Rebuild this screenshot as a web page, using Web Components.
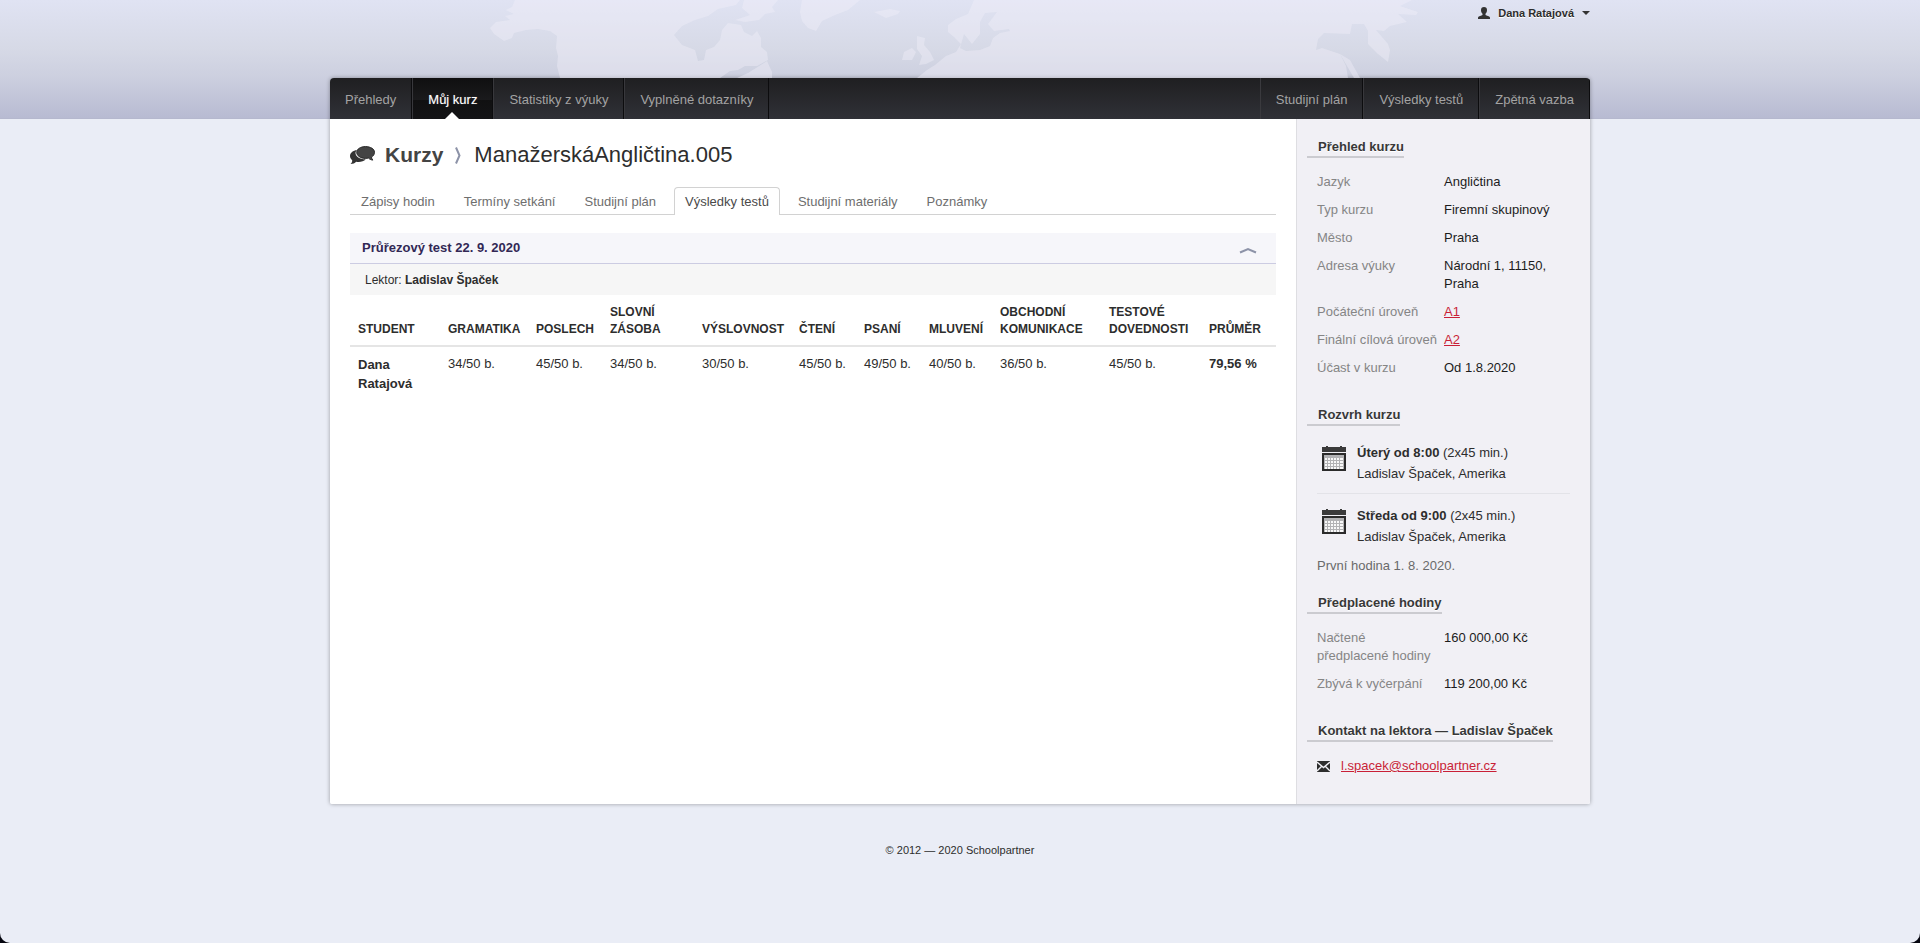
<!DOCTYPE html>
<html lang="cs">
<head>
<meta charset="utf-8">
<meta name="viewport" content="width=device-width, initial-scale=1">
<title>Schoolpartner – Výsledky testů</title>
<style>
html { background: #05060f; }
body { margin: 0; font: 13px/18px "Liberation Sans", Arial, sans-serif; color: #2d2d2d; }
</style>
</head>
<body>
<app-shell>
  <user-menu slot="user">Dana Ratajová</user-menu>
  <nav-bar slot="nav">
    <nav-item>Přehledy</nav-item>
    <nav-item active>Můj kurz</nav-item>
    <nav-item>Statistiky z výuky</nav-item>
    <nav-item>Vyplněné dotazníky</nav-item>
    <nav-item slot="end">Studijní plán</nav-item>
    <nav-item slot="end">Výsledky testů</nav-item>
    <nav-item slot="end">Zpětná vazba</nav-item>
  </nav-bar>
  <course-title section="Kurzy">ManažerskáAngličtina.005</course-title>
  <tab-strip>
    <tab-item>Zápisy hodin</tab-item>
    <tab-item>Termíny setkání</tab-item>
    <tab-item>Studijní plán</tab-item>
    <tab-item active>Výsledky testů</tab-item>
    <tab-item>Studijní materiály</tab-item>
    <tab-item>Poznámky</tab-item>
  </tab-strip>
  <test-panel>
    <span slot="title">Průřezový test 22. 9. 2020</span>
    <span slot="info">Lektor: <b>Ladislav Špaček</b></span>
    <score-table></score-table>
  </test-panel>

  <side-section slot="side" heading="Přehled kurzu">
    <info-row label="Jazyk">Angličtina</info-row>
    <info-row label="Typ kurzu">Firemní skupinový</info-row>
    <info-row label="Město">Praha</info-row>
    <info-row label="Adresa výuky">Národní 1, 11150, Praha</info-row>
    <info-row label="Počáteční úroveň"><red-link>A1</red-link></info-row>
    <info-row label="Finální cílová úroveň"><red-link>A2</red-link></info-row>
    <info-row label="Účast v kurzu">Od 1.8.2020</info-row>
  </side-section>
  <side-section slot="side" heading="Rozvrh kurzu" compact>
    <lesson-slot when="Úterý od 8:00" length="(2x45 min.)">Ladislav Špaček, Amerika</lesson-slot>
    <lesson-slot when="Středa od 9:00" length="(2x45 min.)" last>Ladislav Špaček, Amerika</lesson-slot>
    <side-note>První hodina 1. 8. 2020.</side-note>
  </side-section>
  <side-section slot="side" heading="Předplacené hodiny">
    <info-row label="Načtené předplacené hodiny">160 000,00 Kč</info-row>
    <info-row label="Zbývá k vyčerpání">119 200,00 Kč</info-row>
  </side-section>
  <side-section slot="side" heading="Kontakt na lektora — Ladislav Špaček">
    <mail-contact><red-link>l.spacek@schoolpartner.cz</red-link></mail-contact>
  </side-section>
  <span slot="footer">© 2012 — 2020 Schoolpartner</span>
</app-shell>

<script>
const define = (name, html) => customElements.define(name, class extends HTMLElement {
  constructor() {
    super();
    const t = document.createElement('template');
    t.innerHTML = html;
    this.attachShadow({ mode: 'open' }).append(t.content.cloneNode(true));
  }
  connectedCallback() {
    this.shadowRoot.querySelectorAll('[data-attr]').forEach(el => {
      el.textContent = this.getAttribute(el.dataset.attr) || '';
    });
  }
});

define('world-map', `
<style>
:host { display: block; height: 78px; overflow: hidden; }
svg { display: block; margin: 0 auto; }
</style>
<svg width="960" height="78" viewBox="480 0 960 78" fill="#f3f0fa" fill-opacity=".4" aria-hidden="true">
<path d="M515 0 L512 7 506 10 514 14 505 16 510 20 496 22 490 28 494 34 504 41 512 38 514 33 526 30 538 29 550 31 557 36 556 48 558 56 557 66 560 78 720 78 730 71 738 70 745 66 757 66 768 60 767 52 761 47 761 38 757 31 752 36 744 32 741 25 728 23 722 30 720 40 714 47 706 50 704 60 698 61 695 50 682 45 674 35 682 26 695 20 708 16 718 9 736 5 740 0Z"/>
<path d="M737 78 L748 73 767 61 772 72 772 78Z"/>
<path d="M735 20 L745 22 759 20 765 14 775 12 772 7 778 0 744 0 742 8 750 15Z"/>
<path d="M802 0 L800 12 802 21 808 28 816 31 822 21 835 15 848 10 860 0Z"/>
<path d="M874 12 L886 18 898 14 900 11 890 9Z"/>
<path d="M917 36 L925 38 924 45 930 52 934 60 926 64 919 65 922 56 917 49Z"/>
<path d="M902 60 L904 52 912 48 916 52 912 60Z"/>
<path d="M917 78 L927 70 935 65 946 56 956 52 961 44 954 37 948 32 948 25 956 19 968 14 974 0 1412 0 1400 6 1418 12 1416 15 1398 14 1407 22 1390 26 1384 31 1376 30 1388 44 1390 50 1388 62 1378 54 1368 44 1368 31 1364 24 1352 24 1350 34 1324 33 1318 39 1316 50 1322 48 1340 54 1346 66 1348 78ZM964 34 L960 48 966 51 980 50 990 46 993 38 1000 33 1010 31 1009 29 994 31 988 24 997 12 985 13 980 22 980 34 972 44Z" fill-rule="evenodd"/>
<path d="M1340 54 L1350 60 1360 78 1354 78Z"/>
</svg>`);

define('app-shell', `
<style>
:host { display: flow-root; min-height: 100vh; background: #eaedf6; border-radius: 0 0 10px 10px; }
header { background: linear-gradient(#e0e3f3, #d6d9e6 42%, #cccfdf 66%, #b8bbd2); border-bottom: 1px solid #b5b8ce; height: 118px; }
.wrap { width: calc(100% - 40px); max-width: 1260px; margin: 0 auto; }
.top { position: relative; }
.top slot { display: block; position: absolute; right: 0; top: 4px; }
.frame { margin-top: -41px; box-shadow: 0 0 4px rgba(0,0,0,.35); border-radius: 4px 4px 2px 2px; }
.body { display: grid; grid-template-columns: minmax(0, 1fr) 294px; background: #fff; border-radius: 0 0 2px 2px; }
main { padding: 20px 20px 40px; }
aside { border-left: 1px solid #dedee2; background: #f1f0f5; padding: 17px 20px 29px 10px; box-sizing: border-box; border-radius: 0 0 2px 0; }
aside ::slotted(:last-of-type) { margin-bottom: 0; }
footer { text-align: center; font-size: 11px; padding: 37px 0 40px; }
</style>
<header><div class="wrap top"><slot name="user"></slot><world-map></world-map></div></header>
<div class="wrap frame">
  <slot name="nav"></slot>
  <div class="body"><main><slot></slot></main><aside><slot name="side"></slot></aside></div>
</div>
<footer><slot name="footer"></slot></footer>`);

define('user-menu', `
<style>
:host { display: block; }
button { display: flex; align-items: center; border: 0; padding: 0; background: none; font: bold 11px/18px "Liberation Sans", Arial, sans-serif; color: #2d2d2d; text-shadow: 0 1px 0 #fff; }
.who { margin-right: 8px; }
.caret { margin-left: 8px; }
</style>
<button type="button">
<svg class="who" width="12" height="12" viewBox="0 0 12 12" fill="#333" aria-hidden="true"><path d="M6 0C4 0 3 1.200 3 3c0 1.700.6 3 1.500 3.800V8C3.500 9 .5 9 0 10.500V12h12v-1.500C11.500 9 8.500 9 7.500 8V6.800C8.400 6 9 4.700 9 3c0-1.800-1-3-3-3z"/></svg>
<slot></slot>
<svg class="caret" width="8" height="4" viewBox="0 0 8 4" fill="#333" aria-hidden="true"><path d="M0 0h8L4 4z"/></svg>
</button>`);

define('nav-bar', `
<style>
:host { display: block; }
nav { display: flex; justify-content: space-between; height: 41px; background: linear-gradient(#1f1f21, #303137); border-radius: 4px 4px 0 0; overflow: hidden; }
div { display: flex; }
.end { border-left: 1px solid #3a3a3e; }
</style>
<nav><div><slot></slot></div><div class="end"><slot name="end"></slot></div></nav>`);

define('nav-item', `
<style>
:host { display: block; position: relative; border-right: 1px solid #0c0c0e; }
a { display: block; padding: 0 15px; border-left: 1px solid #38383c; line-height: 43px; height: 41px; color: #a3a3a3; text-decoration: none; }
:host(:first-child) a, :host([slot="end"]:nth-child(5)) a { border-left: 0; }
:host([active]) a { color: #fff; border-left-color: #38383c; background: linear-gradient(#0f0f10, #1a1a1c 53%, #101011 54%, #141416); text-shadow: 0 0 1px rgba(255,255,255,.4); }
:host([active])::after { content: ""; position: absolute; left: 50%; bottom: 0; margin-left: -7px; border: 7px solid transparent; border-top: 0; border-bottom-color: #fff; }
</style>
<a href="#"><slot></slot></a>`);

define('course-title', `
<style>
:host { display: block; }
h1 { display: flex; align-items: center; margin: 0; font-size: 22px; line-height: 32px; font-weight: normal; color: #2d2d2d; }
b { font-size: 21px; color: #444; margin-left: 10px; }
.sep { margin: 0 13px 0 12px; }
</style>
<h1>
<svg width="25" height="19" viewBox="0 0 25 19" aria-hidden="true"><path fill="#333" d="M7 4C3 4.500 0 7 0 10c0 1.800.8 3.100 2.200 4.200C2.300 16 1.600 17 .5 18c2.600 0 4.300-.8 5.600-2.200 3.700.6 7.500-.1 9.700-2.500C10 13.500 5.500 10.500 5.500 7c0-1.200.5-2.100 1.500-3z"/><path fill="#444" stroke="#282828" d="M15.500.6c5 0 9 2.400 9 5.700 0 2-1.200 3.700-3 4.800.1 1.200.6 2.200 1.300 3-1.700-.2-3.200-.8-4.300-2-1 .2-2 .3-3 .3-5 0-8.800-2.700-8.800-6S10.500.6 15.500.6z"/></svg>
<b data-attr="section"></b>
<svg class="sep" width="6" height="17" viewBox="0 0 6 17" fill="none" stroke="#8d93a8" stroke-width="2" aria-hidden="true"><path d="M1 .5l3.500 8L1 16.500"/></svg>
<slot></slot></h1>`);

define('tab-strip', `
<style>
:host { display: flex; gap: 7px; margin-top: 16px; height: 27px; border-bottom: 1px solid #d2d2d2; margin-bottom: 18px; }
</style><slot></slot>`);

define('tab-item', `
<style>
:host { display: block; }
a { display: block; height: 26px; line-height: 27px; padding: 0 10px; border: 1px solid transparent; border-bottom: 0; color: #6e6e6e; text-decoration: none; white-space: nowrap; }
:host([active]) a { height: 27px; border-color: #d2d2d2; border-radius: 4px 4px 0 0; background: #fff; color: #4a4a4a; }
</style><a href="#"><slot></slot></a>`);

define('test-panel', `
<style>
:host { display: block; }
h2 { margin: 0; font-size: 13px; line-height: 30px; }
button { display: flex; justify-content: space-between; align-items: center; width: 100%; box-sizing: border-box; height: 31px; padding: 0 19px 0 12px; border: 0; border-bottom: 1px solid #cccce2; background: #f6f6fa; font: bold 13px/32px "Liberation Sans", Arial, sans-serif; color: #322855; text-align: left; }
.info { height: 31px; line-height: 32px; padding-left: 15px; font-size: 12px; background: #f6f6f6; }
svg { margin-top: 5px; }
</style>
<h2><button type="button" aria-expanded="true"><slot name="title"></slot>
<svg width="18" height="7" viewBox="0 0 18 7" fill="none" stroke="#8d93a8" stroke-width="2" aria-hidden="true"><path d="M1 5.500L9 2l8 3.500"/></svg></button></h2>
<div class="info"><slot name="info"></slot></div>
<slot></slot>`);

define('score-table', `
<style>
:host { display: block; }
table { width: 100%; table-layout: fixed; border-collapse: collapse; }
th, td { text-align: left; padding: 8px 0 8px 8px; font-size: 13px; line-height: 19px; vertical-align: top; white-space: nowrap; }
td { padding-top: 7px; }
thead th { font-size: 12px; line-height: 17px; vertical-align: bottom; border-bottom: 2px solid #e5e5e5; padding: 9px 0 7px 8px; text-transform: uppercase; }
.a { width: 82px; } .b { width: 80px; } .c { width: 66px; } .d { width: 84px; } .e { width: 89px; } .f { width: 57px; } .g { width: 63px; } .h { width: 101px; } .i { width: 92px; }
tbody th, thead .wrap { white-space: normal; }
</style>
<table>
<thead><tr><th class="a">Student</th><th class="b">Gramatika</th><th class="c">Poslech</th><th class="d wrap">Slovní<br>zásoba</th><th class="e">Výslovnost</th><th class="f">Čtení</th><th class="f">Psaní</th><th class="g">Mluvení</th><th class="h wrap">Obchodní komunikace</th><th class="i wrap">Testové dovednosti</th><th>Průměr</th></tr></thead>
<tbody><tr><th>Dana Ratajová</th><td>34/50 b.</td><td>45/50 b.</td><td>34/50 b.</td><td>30/50 b.</td><td>45/50 b.</td><td>49/50 b.</td><td>40/50 b.</td><td>36/50 b.</td><td>45/50 b.</td><td><b>79,56 %</b></td></tr></tbody>
</table>`);

define('side-section', `
<style>
:host { display: block; margin-bottom: 27px; }
:host([compact]) { margin-bottom: 17px; }
h3 { display: table; margin: 0 0 15px; padding: 2px 0 0 11px; font-size: 13px; line-height: 18px; border-bottom: 2px solid #cbcbd0; color: #383838; text-shadow: 0 1px 0 #fff; white-space: nowrap; }
.in { display: flex; flex-direction: column; gap: 10px; padding-left: 10px; }
:host([compact]) .in { gap: 0; }
</style>
<h3 data-attr="heading"></h3><div class="in"><slot></slot></div>`);

define('info-row', `
<style>
:host { display: block; }
dl { display: grid; grid-template-columns: 122px 1fr; column-gap: 5px; margin: 0; }
dt { color: #858585; } dd { margin: 0; color: #1c1c1c; }
</style><dl><dt data-attr="label"></dt><dd><slot></slot></dd></dl>`);

define('red-link', `
<style>:host { display: inline; } a { color: #c91f37; text-decoration: underline; }</style>
<a href="#"><slot></slot></a>`);

define('lesson-slot', `
<style>
:host { display: flex; gap: 11px; padding: 1px 0 9px 5px; line-height: 21px; border-bottom: 1px solid #e3e3e8; margin-bottom: 10px; }
:host([last]) { border: 0; margin: 0; padding-bottom: 10px; }
svg { flex: none; margin-top: 4px; }
</style>
<svg width="24" height="25" viewBox="0 0 24 25" shape-rendering="crispEdges" aria-hidden="true">
<path fill="#3a3a3a" d="M0 1h4V0h2v1h12V0h2v1h4v5H0z"/><path fill="#2b2b2b" d="M0 7h24v18H0z"/><path fill="#b2b2b4" d="M2 9h20v14H2z"/>
<path fill="#f8f8f8" d="M3 12h2v2H3zM6 12h2v2H6zM9 12h2v2H9zM12 12h2v2h-2zM15 12h2v2h-2zM18 12h3v2h-3zM3 15h2v2H3zM6 15h2v2H6zM9 15h2v2H9zM12 15h2v2h-2zM15 15h2v2h-2zM18 15h3v2h-3zM3 18h2v2H3zM6 18h2v2H6zM9 18h2v2H9zM12 18h2v2h-2zM15 18h2v2h-2zM18 18h3v2h-3zM3 21h2v2H3zM6 21h2v2H6zM9 21h2v2H9zM12 21h2v2h-2zM15 21h2v2h-2zM18 21h3v2h-3z"/></svg>
<div><b data-attr="when"></b> <span data-attr="length"></span><br><slot></slot></div>`);

define('side-note', `<style>:host { display: block; color: #6a6a6a; }</style><slot></slot>`);

define('mail-contact', `
<style>:host { display: flex; align-items: center; gap: 11px; } svg { flex: none; }</style>
<svg width="13" height="11" viewBox="0 0 13 11" aria-hidden="true"><path fill="#2d2d2d" d="M0 0h13v11H0z"/><path fill="none" stroke="#f1f0f5" stroke-width="1.400" d="M0 1l6.500 5.500L13 1M0 10l4.500-4.500M13 10L8.500 5.500"/></svg>
<slot></slot>`);
</script>
</body>
</html>
